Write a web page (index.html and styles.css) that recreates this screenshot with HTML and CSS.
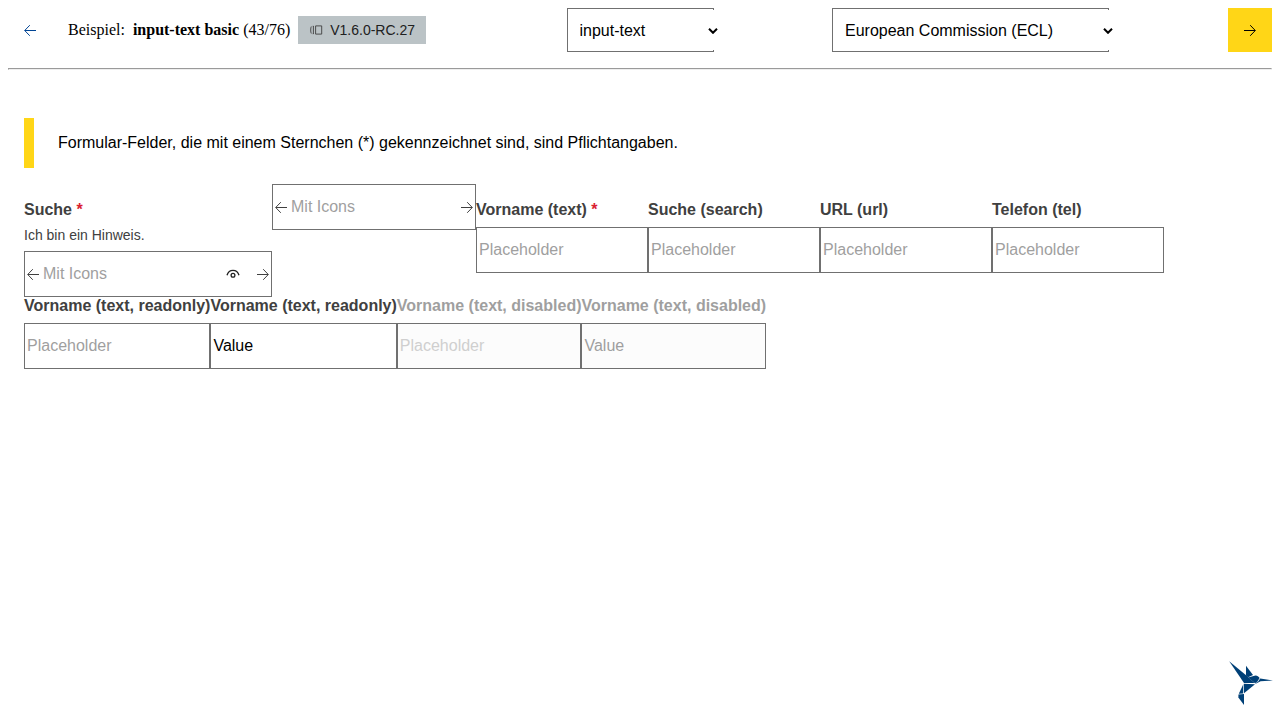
FILE: index.html
```html
<!DOCTYPE html>
<html lang="de">
<head>
<meta charset="utf-8">
<title>input-text basic</title>
<link rel="stylesheet" href="styles.css">
</head>
<body>
<svg class="defs" aria-hidden="true">
  <symbol id="left" viewBox="0 0 12 13"><path d="M5.8 1.2.7 6.5l5.1 5.3M.9 6.5H12"/></symbol>
  <symbol id="right" viewBox="0 0 12 13"><path d="M6.2 1.2 11.3 6.5l-5.1 5.3M11.1 6.5H0"/></symbol>
  <symbol id="chevron" viewBox="0 0 10 6"><path d="M1 .8l4 4 4-4"/></symbol>
</svg>
<header class="header">
  <div class="title">
    <button class="nav" aria-label="Zurück"><svg class="icon"><use href="#left"/></svg></button>
    <div class="example">Beispiel: <strong>input-text basic</strong> (43/76)</div>
    <span class="badge"><svg class="versions" viewBox="0 0 14 10"><path d="M6.1.9h6.1v8.2H6.1zM3.9 1v8M1.8 1.5C1 2.7 1 7.3 1.8 8.5M3.9 1.2h-.6M3.9 8.8h-.6"/></svg>V1.6.0-RC.27</span>
  </div>
  <div class="select component"><select aria-label="Komponente"><option>input-text</option></select><svg class="chevron"><use href="#chevron"/></svg></div>
  <div class="select theme"><select aria-label="Theme"><option>European Commission (ECL)</option></select><svg class="chevron"><use href="#chevron"/></svg></div>
  <button class="nav next" aria-label="Weiter"><svg class="icon"><use href="#right"/></svg></button>
</header>
<hr class="rule">
<main class="main">
  <p class="notice">Formular-Felder, die mit einem Sternchen (*) gekennzeichnet sind, sind Pflichtangaben.</p>
  <div class="row first">
    <div class="field search">
      <label>Suche <span class="star">*</span></label>
      <span class="hint">Ich bin ein Hinweis.</span>
      <div class="box"><svg class="icon"><use href="#left"/></svg><input placeholder="Mit Icons"><svg class="eye" viewBox="0 0 14 10"><path d="M1 6.2C2 3 4.2 1.3 7 1.3S12 3 13 6.2"/><circle cx="7" cy="6.2" r="1.9"/></svg><svg class="icon"><use href="#right"/></svg></div>
    </div>
    <div class="field plain">
      <div class="box"><svg class="icon"><use href="#left"/></svg><input placeholder="Mit Icons"><svg class="icon"><use href="#right"/></svg></div>
    </div>
    <div class="field"><label>Vorname (text) <span class="star">*</span></label><div class="box"><input placeholder="Placeholder"></div></div>
    <div class="field"><label>Suche (search)</label><div class="box"><input placeholder="Placeholder"></div></div>
    <div class="field"><label>URL (url)</label><div class="box"><input placeholder="Placeholder"></div></div>
    <div class="field"><label>Telefon (tel)</label><div class="box"><input placeholder="Placeholder"></div></div>
  </div>
  <div class="row">
    <div class="field"><label>Vorname (text, readonly)</label><div class="box"><input placeholder="Placeholder" readonly></div></div>
    <div class="field"><label>Vorname (text, readonly)</label><div class="box"><input value="Value" readonly></div></div>
    <div class="field off"><label>Vorname (text, disabled)</label><div class="box"><input placeholder="Placeholder" disabled></div></div>
    <div class="field off"><label>Vorname (text, disabled)</label><div class="box"><input value="Value" disabled></div></div>
  </div>
</main>
<svg class="bird" viewBox="0 0 60 60">
  <path d="M9.2 9.2 27 24l7.6 7H24z"/>
  <path d="M26 13.8 33 23l-5 2.2-2-1.8z"/>
  <path d="M28.2 25.6 33.6 24c2-1.2 4.6-.6 6 2l-2.3 3.8-2.3 1.4z"/>
  <path d="M40.2 26.6 53 28.4l-12.4.8-5 2.6-.2-.6 2.8-1.6z"/>
  <path d="M23.8 31.8 35 32.2 24 41.2z"/>
  <path d="M23.2 32.6v8.8l-4.4.4z"/>
  <path d="M18.4 42.4 24 42v11l-5.6-7.6z"/>
</svg>
</body>
</html>
```
FILE: styles.css
```css
* { box-sizing: border-box; }
body { margin: 8px; background: #fff; color: #000; font: 16px "Liberation Sans", Arial, sans-serif; }
svg { display: block; fill: none; stroke: currentColor; flex: none; }
.defs { display: none; }
.icon { width: 12px; height: 13px; }
.header { display: grid; grid-template-columns: 559px 265px 396px 44px; height: 44px; grid-template-rows: 44px; }
.title { display: flex; align-items: center; gap: 8px; }
.nav { display: flex; align-items: center; justify-content: center; width: 44px; height: 44px; padding: 1px 0 0; border: 0; background: none; color: #004494; }
.next { background: #ffd617; color: #000; }
.example { margin-left: 8px; font-family: "Liberation Serif", "Times New Roman", serif; white-space: nowrap; }
.example strong { margin-left: 4px; }
.badge { display: flex; align-items: center; height: 28px; width: 128px; padding-left: 11px; gap: 6px; background: #bbc3c6; color: #202020; font-size: 14px; white-space: nowrap; }
.versions { width: 15px; height: 10px; stroke-width: .9; color: #404040; }
.select { position: relative; height: 44px; border: 1px solid #707070; border-right: 0; }
.select::before, .select::after { content: ""; position: absolute; right: 0; width: 1px; height: 1px; background: #707070; }
.select::before { top: 0; }
.select::after { bottom: 0; }
.select select { appearance: none; width: 100%; height: 42px; border: 0; padding: 0 0 0 11.5px; background: none; font: inherit; color: #000; outline: 0; }
.component { width: 147px; }
.theme { width: 277px; }
.select.theme select { padding-left: 12px; }
.chevron { position: absolute; right: -4px; top: 18.5px; width: 10px; height: 6px; stroke-width: 2; }
.rule { margin: 16px 0 0; }
.main { padding: 48px 16px 0; }
.notice { display: flex; align-items: center; height: 50px; margin: 0 0 16px; padding-left: 24px; border-left: 10px solid #ffd617; }
.row { display: flex; align-items: flex-start; }
.field { display: flex; flex-direction: column; gap: 8px; color: #404040; }
.first .field { width: 172px; padding-top: 17px; }
.first .search { width: 248px; }
.first .plain { width: 204px; padding-top: 0; }
label { font-weight: 700; line-height: 18px; white-space: nowrap; }
.star { color: #da2131; }
.hint { font-size: 14px; line-height: 16px; }
.box { display: flex; align-items: center; height: 46px; padding: 0 2px; border: 1px solid #707070; background: #fff; }
.box .icon { margin-top: 1px; }
.box input { flex: 1; width: 0; min-width: 0; height: 44px; padding: 0; border: 0; background: none; color: #000; font: inherit; outline: 0; }
.box .icon + input { padding-left: 4px; }
.box input::placeholder { color: #9f9f9f; opacity: 1; }
.eye { width: 14px; height: 10px; margin: 0 17px 0 0; stroke-width: 1.3; color: #202020; }
.off { color: #9f9f9f; }
.off .box { background: #fcfcfc; }
.off input { color: #9f9f9f; }
.off .box input::placeholder { color: #cfcfcf; }
.bird { position: fixed; right: 0; bottom: 8px; width: 60px; height: 60px; fill: #004077; stroke: none; }
```
